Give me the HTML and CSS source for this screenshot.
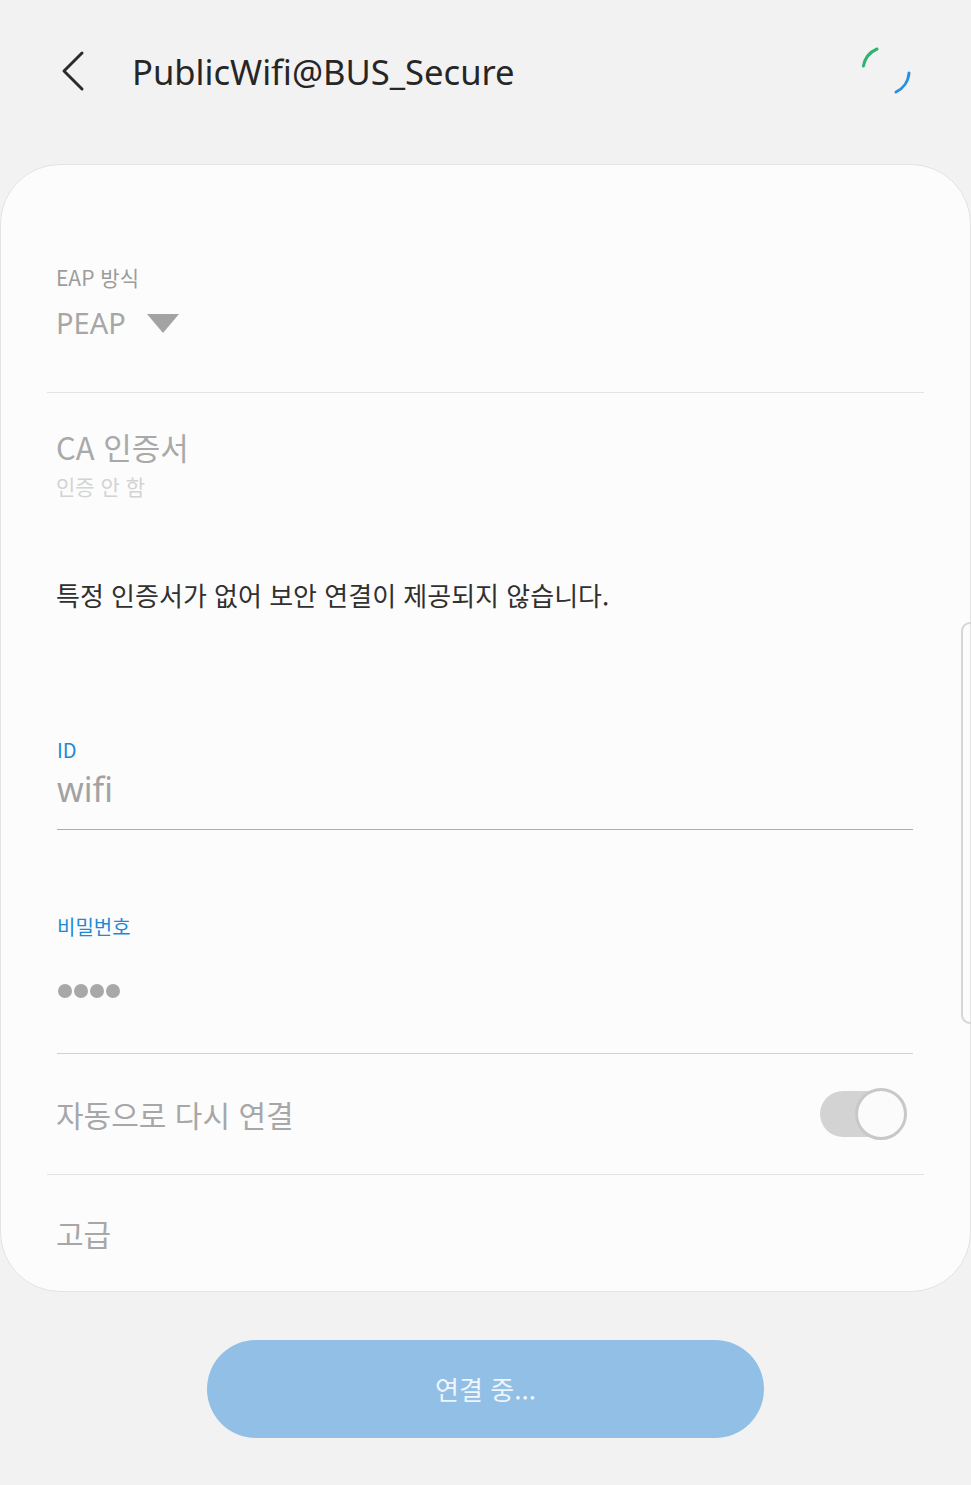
FILE: index.html
```html
<!DOCTYPE html>
<html lang="ko">
<head>
<meta charset="utf-8">
<title>PublicWifi@BUS_Secure</title>
<link rel="stylesheet" href="styles.css">
</head>
<body>
<header class="topbar">
  <svg class="back" width="30" height="44" viewBox="0 0 30 44" aria-hidden="true">
    <path d="M23 4 L5 22 L23 40" fill="none" stroke="#2a2a2a" stroke-width="3" stroke-linecap="round" stroke-linejoin="round"/>
  </svg>
  <h1 class="title">PublicWifi@BUS_Secure</h1>
  <svg class="spinner" width="50" height="50" viewBox="0 0 50 50" aria-hidden="true">
    <path d="M2.4 21 A23 23 0 0 1 16 4" fill="none" stroke="#2db56f" stroke-width="3" stroke-linecap="round"/>
    <path d="M48 28 A23 23 0 0 1 35 47" fill="none" stroke="#2b8fe0" stroke-width="3" stroke-linecap="round"/>
  </svg>
</header>

<main class="card">
  <section class="block eap">
    <div class="small-label">EAP 방식</div>
    <div class="select">
      <span class="select-value">PEAP</span>
      <svg class="caret" width="32" height="19" viewBox="0 0 32 19" aria-hidden="true"><path d="M0 0 H32 L16 19 Z" fill="#a3a3a3"/></svg>
    </div>
  </section>
  <div class="divider"></div>

  <section class="block ca">
    <div class="ca-title">CA 인증서</div>
    <div class="ca-sub">인증 안 함</div>
    <p class="warning">특정 인증서가 없어 보안 연결이 제공되지 않습니다.</p>

    <div class="field field-id">
      <div class="field-label">ID</div>
      <div class="field-value">wifi</div>
    </div>

    <div class="field field-pw">
      <div class="field-label">비밀번호</div>
      <div class="dots"><span></span><span></span><span></span><span></span></div>
    </div>
  </section>

  <div class="row toggle-row">
    <span class="row-text">자동으로 다시 연결</span>
    <span class="toggle"><span class="track"></span><span class="knob"></span></span>
  </div>
  <div class="divider"></div>
  <div class="row adv-row">
    <span class="row-text">고급</span>
  </div>

  <div class="scrollbar"></div>
</main>

<div class="btn-wrap">
  <button class="connect" type="button">연결 중...</button>
</div>
</body>
</html>
```

FILE: styles.css
```css
* { box-sizing: border-box; }

html, body {
  margin: 0;
  padding: 0;
  background: #f2f2f2;
}

body {
  width: 971px;
  height: 1485px;
  overflow: hidden;
  font-family: "Noto Sans", "Noto Sans CJK KR", sans-serif;
}

.topbar {
  height: 144px;
  display: flex;
  align-items: center;
  padding-left: 59px;
  padding-right: 60px;
}

.back { display: block; margin-top: -2px; }

.title {
  margin: 0 0 0 43px;
  flex: 1;
  font-family: "Noto Sans", "Noto Sans CJK KR", sans-serif;
  font-weight: 400;
  font-size: 34.6px;
  line-height: 44px;
  color: #262626;
  letter-spacing: 0;
}

.spinner { display: block; margin-top: -4px; }

.card {
  position: relative;
  margin-top: 20px;
  background: #fcfcfc;
  border: 1px solid #e3e3e3;
  border-radius: 60px;
  height: 1128px;
}

.block { padding: 0 56px 0 55px; }

.eap { padding-top: 97px; padding-bottom: 49px; }

.small-label {
  font-family: "Noto Sans CJK KR", sans-serif;
  font-size: 21px;
  line-height: 30px;
  color: #9c9c9c;
}

.select {
  margin-top: 11px;
  height: 40px;
  display: flex;
  align-items: center;
}

.select-value {
  font-size: 29px;
  line-height: 40px;
  color: #a6a6a6;
}

.caret { margin-left: 21px; margin-top: 1px; }

.divider {
  height: 1px;
  margin: 0 46px 0 46px;
  background: #e3e3e3;
}

.ca { padding-top: 34px; }

.ca-title {
  font-family: "Noto Sans CJK KR", sans-serif;
  font-size: 31px;
  line-height: 40px;
  color: #a9a9a9;
}

.ca-sub {
  margin-top: 4px;
  font-family: "Noto Sans CJK KR", sans-serif;
  font-size: 21px;
  line-height: 30px;
  color: #d3d3d3;
}

.warning {
  margin: 76px 0 0 0;
  font-family: "Noto Sans CJK KR", sans-serif;
  font-size: 26px;
  line-height: 36px;
  color: #303030;
}

.field-label {
  font-family: "Noto Sans CJK KR", sans-serif;
  font-size: 20px;
  line-height: 28px;
  color: #1c8ad4;
}

.field { margin-left: 1px; margin-right: 1px; }

.field-id {
  margin-top: 123px;
  padding-bottom: 18px;
  border-bottom: 1px solid #74c0e2;
}

.field-value {
  margin-top: 3px;
  font-size: 34px;
  line-height: 44px;
  color: #a2a2a2;
}

.field-pw {
  margin-top: 83px;
  padding-bottom: 55px;
  border-bottom: 1px solid #d2d2d2;
}

.dots {
  margin-top: 43px;
  display: flex;
  gap: 2px;
  height: 14px;
  padding-left: 1px;
}

.dots span {
  width: 14px;
  height: 14px;
  border-radius: 50%;
  background: #a8a8a8;
}

.row {
  display: flex;
  align-items: center;
  padding: 0 63px 0 55px;
}

.toggle-row { height: 120px; justify-content: space-between; }

.adv-row { height: 115px; }

.row-text {
  font-family: "Noto Sans CJK KR", sans-serif;
  font-size: 30px;
  line-height: 40px;
  color: #a7a7a7;
}

.toggle {
  position: relative;
  width: 87px;
  height: 52px;
  display: block;
}

.track {
  position: absolute;
  left: 0;
  top: 3px;
  width: 76px;
  height: 46px;
  border-radius: 23px;
  background: #d3d3d3;
}

.knob {
  position: absolute;
  right: 0;
  top: 0;
  width: 52px;
  height: 52px;
  border-radius: 50%;
  background: #fbfbfb;
  border: 3px solid #c8c8c8;
}

.scrollbar {
  position: absolute;
  right: -1px;
  top: 457px;
  width: 10px;
  height: 402px;
  border: 2px solid #d6d6d6;
  border-right: none;
  border-radius: 9px 0 0 9px;
}

.btn-wrap {
  display: flex;
  justify-content: center;
  padding-top: 48px;
}

.connect {
  width: 557px;
  height: 98px;
  border: none;
  border-radius: 49px;
  background: #91bfe6;
  color: #eef5fb;
  font-family: "Noto Sans CJK KR", sans-serif;
  font-size: 26px;
  line-height: 36px;
  padding: 0;
}
```
